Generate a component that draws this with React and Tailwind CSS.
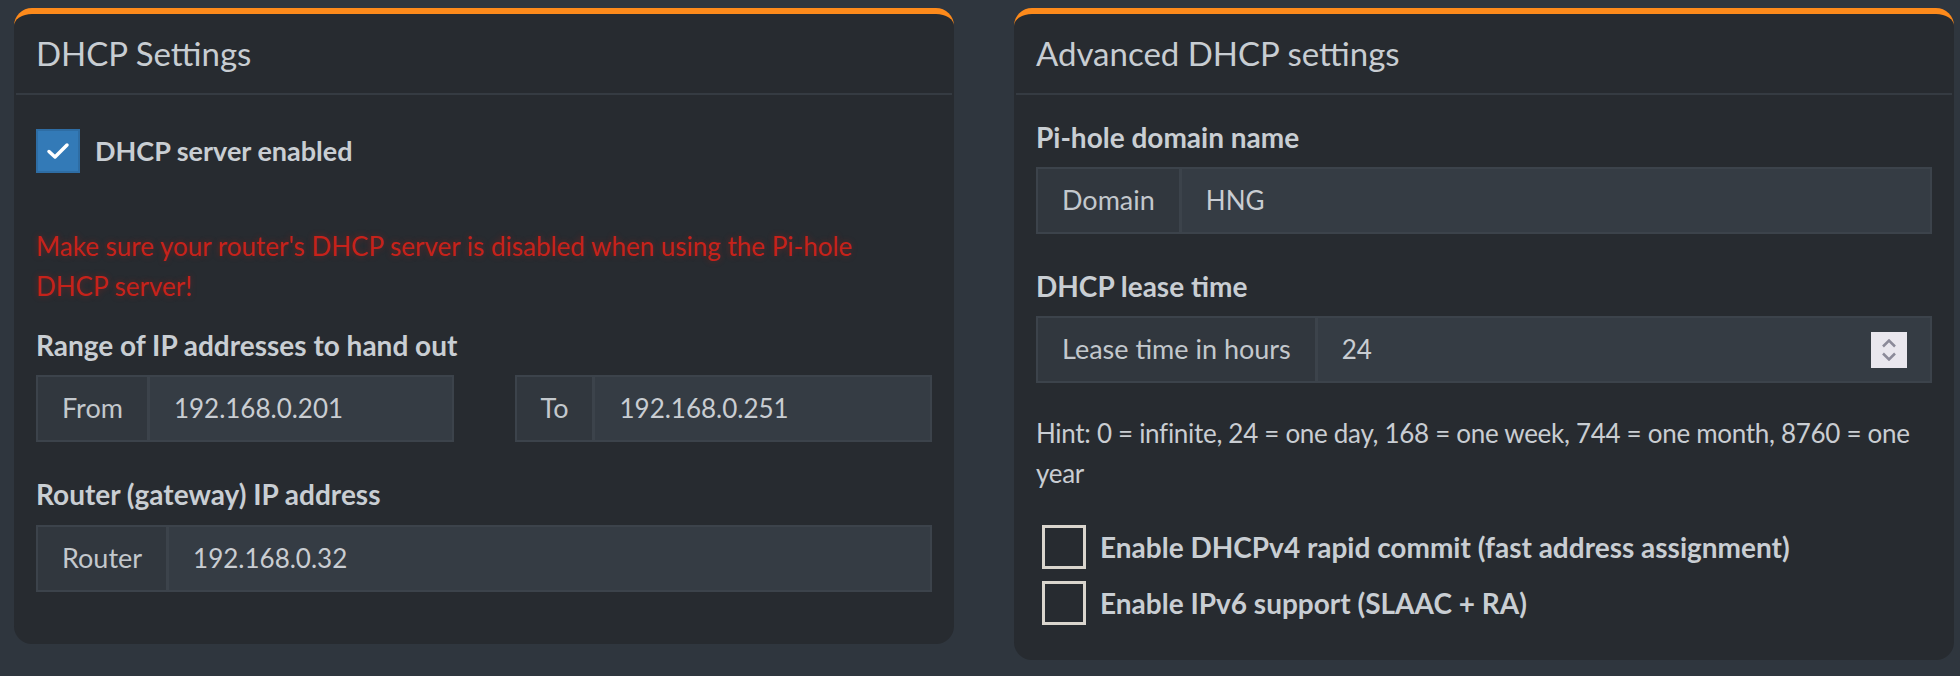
import React from "react";

const font = { fontFamily: "Lato, 'Noto Sans', sans-serif" };

function Check() {
  return (
    <div className="w-[44px] h-[44px] shrink-0 bg-[#337ab7] border-2 border-[#2e6da4] flex items-center justify-center">
      <svg width="24" height="18" viewBox="0 0 24 18">
        <path d="M3 9.5 L9 15 L21 3" fill="none" stroke="#ffffff" strokeWidth="3.5" strokeLinecap="round" strokeLinejoin="round" />
      </svg>
    </div>
  );
}

function Unchecked() {
  return <div className="w-[44px] h-[44px] shrink-0 border-[3px] border-[#d9d5cd]" />;
}

function Group({ addon, value, spinner }) {
  return (
    <div className="flex h-[67px] border-2 border-[#3c434b] bg-[#353c44]">
      <div className="flex items-center px-[24px] bg-[#31373e] border-r-[3px] border-[#3c434b] text-[27px] text-[#c3c8cd]">
        {addon}
      </div>
      <div className="flex-1 flex items-center justify-between pl-[24px] pr-[23px] text-[26px] text-[#c9cdd2]">
        <span>{value}</span>
        {spinner && (
          <div className="w-[36px] h-[36px] bg-[#e9e7ee] flex flex-col items-center justify-center gap-[4px]">
            <svg width="16" height="9" viewBox="0 0 16 9">
              <path d="M2 7.5 L8 1.5 L14 7.5" fill="none" stroke="#8b8a99" strokeWidth="2.5" />
            </svg>
            <svg width="16" height="9" viewBox="0 0 16 9">
              <path d="M2 1.5 L8 7.5 L14 1.5" fill="none" stroke="#8b8a99" strokeWidth="2.5" />
            </svg>
          </div>
        )}
      </div>
    </div>
  );
}

function Card({ title, children, className }) {
  return (
    <div className={"w-[940px] bg-[#272b30] rounded-[18px] border-t-[6px] border-[#fd8a1b] flex flex-col " + className}>
      <div className="h-[81px] mx-[2px] border-b-2 border-[#353b42] flex items-center pl-[20px]">
        <h3 className="text-[33px] leading-none text-[#c8cdd2]">{title}</h3>
      </div>
      {children}
    </div>
  );
}

function Label({ children, className }) {
  return <div className={"text-[28px] leading-[40px] font-bold text-[#c9ced3] " + className}>{children}</div>;
}

export default function App() {
  return (
    <div style={font} className="w-[1960px] h-[676px] bg-[#2f363e] flex items-start gap-[60px] pl-[14px] pt-[8px]">
      <Card title="DHCP Settings" className="h-[636px]">
        <div className="px-[22px] flex flex-col">
          <div className="mt-[34px] flex items-center gap-[15px]">
            <Check />
            <span className="text-[27px] font-bold text-[#c9ced3]">DHCP server enabled</span>
          </div>
          <p className="mt-[53px] text-[26px] leading-[40px] text-[#c6221a] [text-shadow:0_0_6px_rgba(200,30,20,0.4)]">
            Make sure your router's DHCP server is disabled when using the Pi-hole
            <br />
            DHCP server!
          </p>
          <Label className="mt-[19px]">Range of IP addresses to hand out</Label>
          <div className="mt-[10px] grid grid-cols-2 gap-[61px]">
            <Group addon="From" value="192.168.0.201" />
            <Group addon="To" value="192.168.0.251" />
          </div>
          <Label className="mt-[32px]">Router (gateway) IP address</Label>
          <div className="mt-[11px]">
            <Group addon="Router" value="192.168.0.32" />
          </div>
        </div>
      </Card>
      <Card title="Advanced DHCP settings" className="h-[652px]">
        <div className="px-[22px] flex flex-col">
          <Label className="mt-[22px]">Pi-hole domain name</Label>
          <div className="mt-[10px]">
            <Group addon="Domain" value="HNG" />
          </div>
          <Label className="mt-[32px]">DHCP lease time</Label>
          <div className="mt-[10px]">
            <Group addon="Lease time in hours" value="24" spinner />
          </div>
          <p className="mt-[30px] text-[26px] leading-[40px] tracking-[-0.3px] whitespace-nowrap text-[#c9cdd2]">
            Hint: 0 = infinite, 24 = one day, 168 = one week, 744 = one month, 8760 = one
            <br />
            year
          </p>
          <div className="mt-[32px] flex items-center gap-[14px] pl-[6px]">
            <Unchecked />
            <span className="text-[28px] font-bold text-[#c9ced3]">Enable DHCPv4 rapid commit (fast address assignment)</span>
          </div>
          <div className="mt-[12px] flex items-center gap-[14px] pl-[6px]">
            <Unchecked />
            <span className="text-[28px] font-bold text-[#c9ced3]">Enable IPv6 support (SLAAC + RA)</span>
          </div>
        </div>
      </Card>
    </div>
  );
}
